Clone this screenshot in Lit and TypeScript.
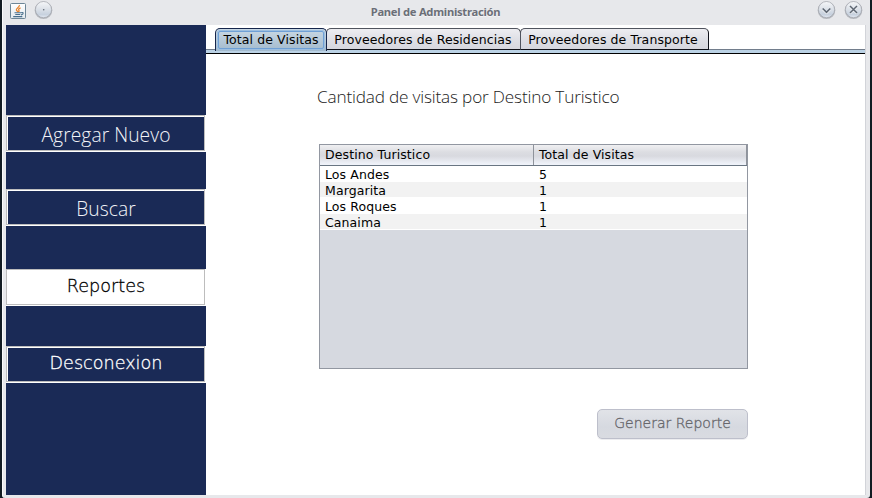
import { LitElement, html, css, svg } from "lit";
import { customElement, state } from "lit/decorators.js";
import { classMap } from "lit/directives/class-map.js";

const rows: [string, number][] = [
  ["Los Andes", 5],
  ["Margarita", 1],
  ["Los Roques", 1],
  ["Canaima", 1],
];
const tabs = ["Total de Visitas", "Proveedores de Residencias", "Proveedores de Transporte"];

@customElement("window-orb")
export class WindowOrb extends LitElement {
  static properties = { kind: {} };
  declare kind: string;

  static styles = css`
    :host { display: block; width: 20px; height: 20px; }
    svg { display: block; }
  `;

  render() {
    const glyph =
      this.kind === "close"
        ? svg`<path d="M6.5 6L13 12.5M13 6L6.5 12.5" fill="none" stroke="#fff" stroke-width="1.6" transform="translate(0 1)"/>
            <path d="M6.3 6L13.3 13M13.3 6L6.3 13" fill="none" stroke="#5d6672" stroke-width="1.5"/>`
        : this.kind === "down"
        ? svg`<path d="M6 9.5L9.8 13.3L13.6 9.5" fill="none" stroke="#fff" stroke-width="1.5"/>
            <path d="M6 8.5L9.8 12.3L13.6 8.5" fill="none" stroke="#5d6672" stroke-width="1.6"/>`
        : svg`<circle cx="10" cy="9.8" r=".8" fill="#5d6672"/>`;
    return html`<svg width="20" height="20" viewBox="0 0 20 20">
      <defs>
        <linearGradient id="face" x1="0" y1="0" x2="0" y2="1">
          <stop offset="0" stop-color="#f6f7f9" />
          <stop offset=".45" stop-color="#dde2e9" />
          <stop offset=".8" stop-color="#c7d1de" />
          <stop offset="1" stop-color="#e4eaf3" />
        </linearGradient>
      </defs>
      <circle cx="9.5" cy="10.3" r="8.8" fill="#b5b8be" />
      <circle cx="9.5" cy="9.6" r="8.1" fill="url(#face)" stroke="#a0a4ab" stroke-width=".7" />
      <g transform="translate(-.3 0)">${glyph}</g>
    </svg>`;
  }
}

@customElement("app-root")
export class AppRoot extends LitElement {
  @state() private tab = 0;

  static styles = css`
    * { box-sizing: border-box; }
    :host {
      display: flex; width: 872px; height: 498px; overflow: hidden;
      background: #121b22; padding: 0 2px;
      font-family: "DejaVu Sans", sans-serif; font-size: 12.5px; letter-spacing: .1px; color: #000;
    }
    .frame {
      width: 868px; height: 498px; display: flex; flex-direction: column;
      background: #e7e8eb; border-left: 1px solid #fafafb; border-radius: 0 0 3px 3px;
      padding: 0 4px 3px 3px;
    }
    .titlebar { height: 25px; display: flex; align-items: flex-start; flex: none; }
    .java { width: 17px; height: 17px; margin: 3px 0 0 4px; display: block; }
    .menu { margin: 0 0 0 7px; }
    .title {
      flex: 1; text-align: center;
      font: bold 11.2px/24px "Noto Sans", sans-serif; letter-spacing: -.26px; color: #6b6f78; text-shadow: 0 1px #f4f4f6;
    }
    .controls { display: flex; gap: 7px; margin-right: 2px; }
    .content { flex: 1; display: flex; min-height: 0; }
    .side {
      width: 200px; background: #1a2a56; display: flex; flex-direction: column; padding-top: 90px; flex: none;
    }
    .nav { height: 37px; background: #fff; padding: 0 1px 1px 0; flex: none; }
    .nav + .nav { margin-top: 37px; }
    .nav.reportes { margin-top: 43px; }
    .nav.salir { margin-top: 40px; }
    .face { height: 36px; border: 1px solid #bdbdbd; padding: 1px 0 0 1px; }
    .label {
      height: 33px; background: #1a2a56; color: #f2f4f8; text-align: center;
      font: 300 19.3px/35px "Open Sans", sans-serif; letter-spacing: .04px;
    }
    .geo {
      font: 200 17.6px/31px "URW Gothic", "DejaVu Sans Light", "DejaVu Sans", sans-serif; letter-spacing: 0;
      color: #fff; -webkit-text-stroke: .3px currentColor;
    }
    .reportes .label { background: #fff; color: #000; }
    .main {
      flex: 1; background: #fff; border-right: 1px solid #d2d4d9;
      display: flex; flex-direction: column; align-items: stretch; min-width: 0;
    }
    .tabs {
      display: flex; height: 25px; padding: 3px 0 0 9px; background: #fff;
      border-bottom: 1px solid #727d8c; flex: none;
    }
    .tab {
      height: 22px; border: 1px solid #50545e; border-bottom-color: #10121a; border-right-color: #10121a;
      border-radius: 5px 5px 0 0; text-align: center; line-height: 21px; white-space: nowrap;
      background: linear-gradient(#ededf1, #dfe0e6 50%, #d6d7de); width: 195px; margin-left: -1px; padding-right: 1px;
    }
    .tab:first-child { margin-left: 0; width: 112px; }
    .tab:last-child { width: 189px; padding-right: 3px; }
    .tab.on {
      height: 23px; border-color: #16264c; border-bottom: 0; padding: 2px 2px 0; position: relative;
      background: linear-gradient(#c9d8e4, #a3bacd); line-height: 15px;
    }
    .tab.on span { display: block; height: 18px; border: 1px solid #6fa0d6; box-shadow: 0 0 0 1px #9dbfe0; border-radius: 2px; }
    .band { height: 4px; background: #bbd2e5; border-bottom: 1px solid #000; flex: none; }
    .page { display: flex; flex-direction: column; width: 429px; margin-left: 113px; }
    .heading {
      margin: 27px 0 0 -2px; height: 32px; font: 300 17.2px/32px "Open Sans", sans-serif; letter-spacing: -.18px; color: #222; white-space: nowrap;
    }
    .table { margin-top: 31px; height: 225px; border: 1px solid #9297a1; background: #d6d9e0; }
    .head, .row { display: grid; grid-template-columns: 214px 1fr; }
    .head {
      height: 21px; line-height: 20px; border-bottom: 1px solid #697582;
      background: linear-gradient(#f0f0f2, #dcdde2 35%, #d8d9df 55%, #eff2f9 95%);
    }
    .head .cell { border-right: 1px solid #8f939b; }
    .cell { padding-left: 5px; }
    .row { height: 16px; line-height: 17px; background: #fff; }
    .row.alt { background: linear-gradient(#f2f2f2 15px, #fff 15px); }
    .report {
      align-self: flex-end; margin-top: 40px; width: 151px; height: 30px; padding: 0 0 3px;
      border: 1px solid #bdbfcb; border-radius: 5px; background: linear-gradient(#e1e3e8, #d6d9e0 60%, #d9dbe1);
      font: 200 14px/24px "URW Gothic", "DejaVu Sans Light", "DejaVu Sans", sans-serif; color: #66666b; box-shadow: 0 1px #ededf0;
      white-space: nowrap; -webkit-text-stroke: .3px currentColor;
    }
  `;

  private nav(label: string, cls = "") {
    return html`<div class="nav ${cls}"><div class="face"><div class="label ${cls ? "geo" : ""}">${label}</div></div></div>`;
  }

  render() {
    return html`<div class="frame">
      <div class="titlebar">
        <svg class="java" viewBox="0 0 17 17">
          <defs><linearGradient id="tile" x1="0" y1="0" x2="0" y2="1"><stop offset="0" stop-color="#fff"/><stop offset="1" stop-color="#e3e9ee"/></linearGradient></defs>
          <rect x=".5" y=".5" width="15" height="15" rx="1" fill="url(#tile)" stroke="#6d8697"/>
          <path d="M9.4 2C10 4.2 5.6 5.2 6.4 7.2L8 9M10.6 4.8C8.2 5.8 8.4 6.6 9 7.4Q9.4 8.4 8.4 9" fill="none" stroke="#e8852e" stroke-width="1.3"/>
          <path d="M4.5 9.8H11M5.3 11.5H10.2M3.2 13.6H12.3M11.2 9.6Q14 9 12.8 11L11 11.9" fill="none" stroke="#496f8d" stroke-width="1.1"/>
        </svg>
        <window-orb class="menu" kind="dot"></window-orb>
        <div class="title">Panel de Administración</div>
        <div class="controls"><window-orb kind="down"></window-orb><window-orb kind="close"></window-orb></div>
      </div>
      <div class="content">
        <div class="side">
          ${this.nav("Agregar Nuevo")} ${this.nav("Buscar")} ${this.nav("Reportes", "reportes")} ${this.nav("Desconexion", "salir")}
        </div>
        <div class="main">
          <div class="tabs">
            ${tabs.map((t, i) => html`<div class=${classMap({ tab: true, on: i === this.tab })} @click=${() => (this.tab = i)}><span>${t}</span></div>`)}
          </div>
          <div class="band"></div>
          <div class="page">
            <div class="heading">Cantidad de visitas por Destino Turistico</div>
            <div class="table">
              <div class="head"><div class="cell">Destino Turistico</div><div class="cell">Total de Visitas</div></div>
              ${rows.map(([d, n], i) => html`<div class=${classMap({ row: true, alt: i % 2 === 1 })}><div class="cell">${d}</div><div class="cell">${n}</div></div>`)}
            </div>
            <button class="report" disabled>Generar Reporte</button>
          </div>
        </div>
      </div>
    </div>`;
  }
}
